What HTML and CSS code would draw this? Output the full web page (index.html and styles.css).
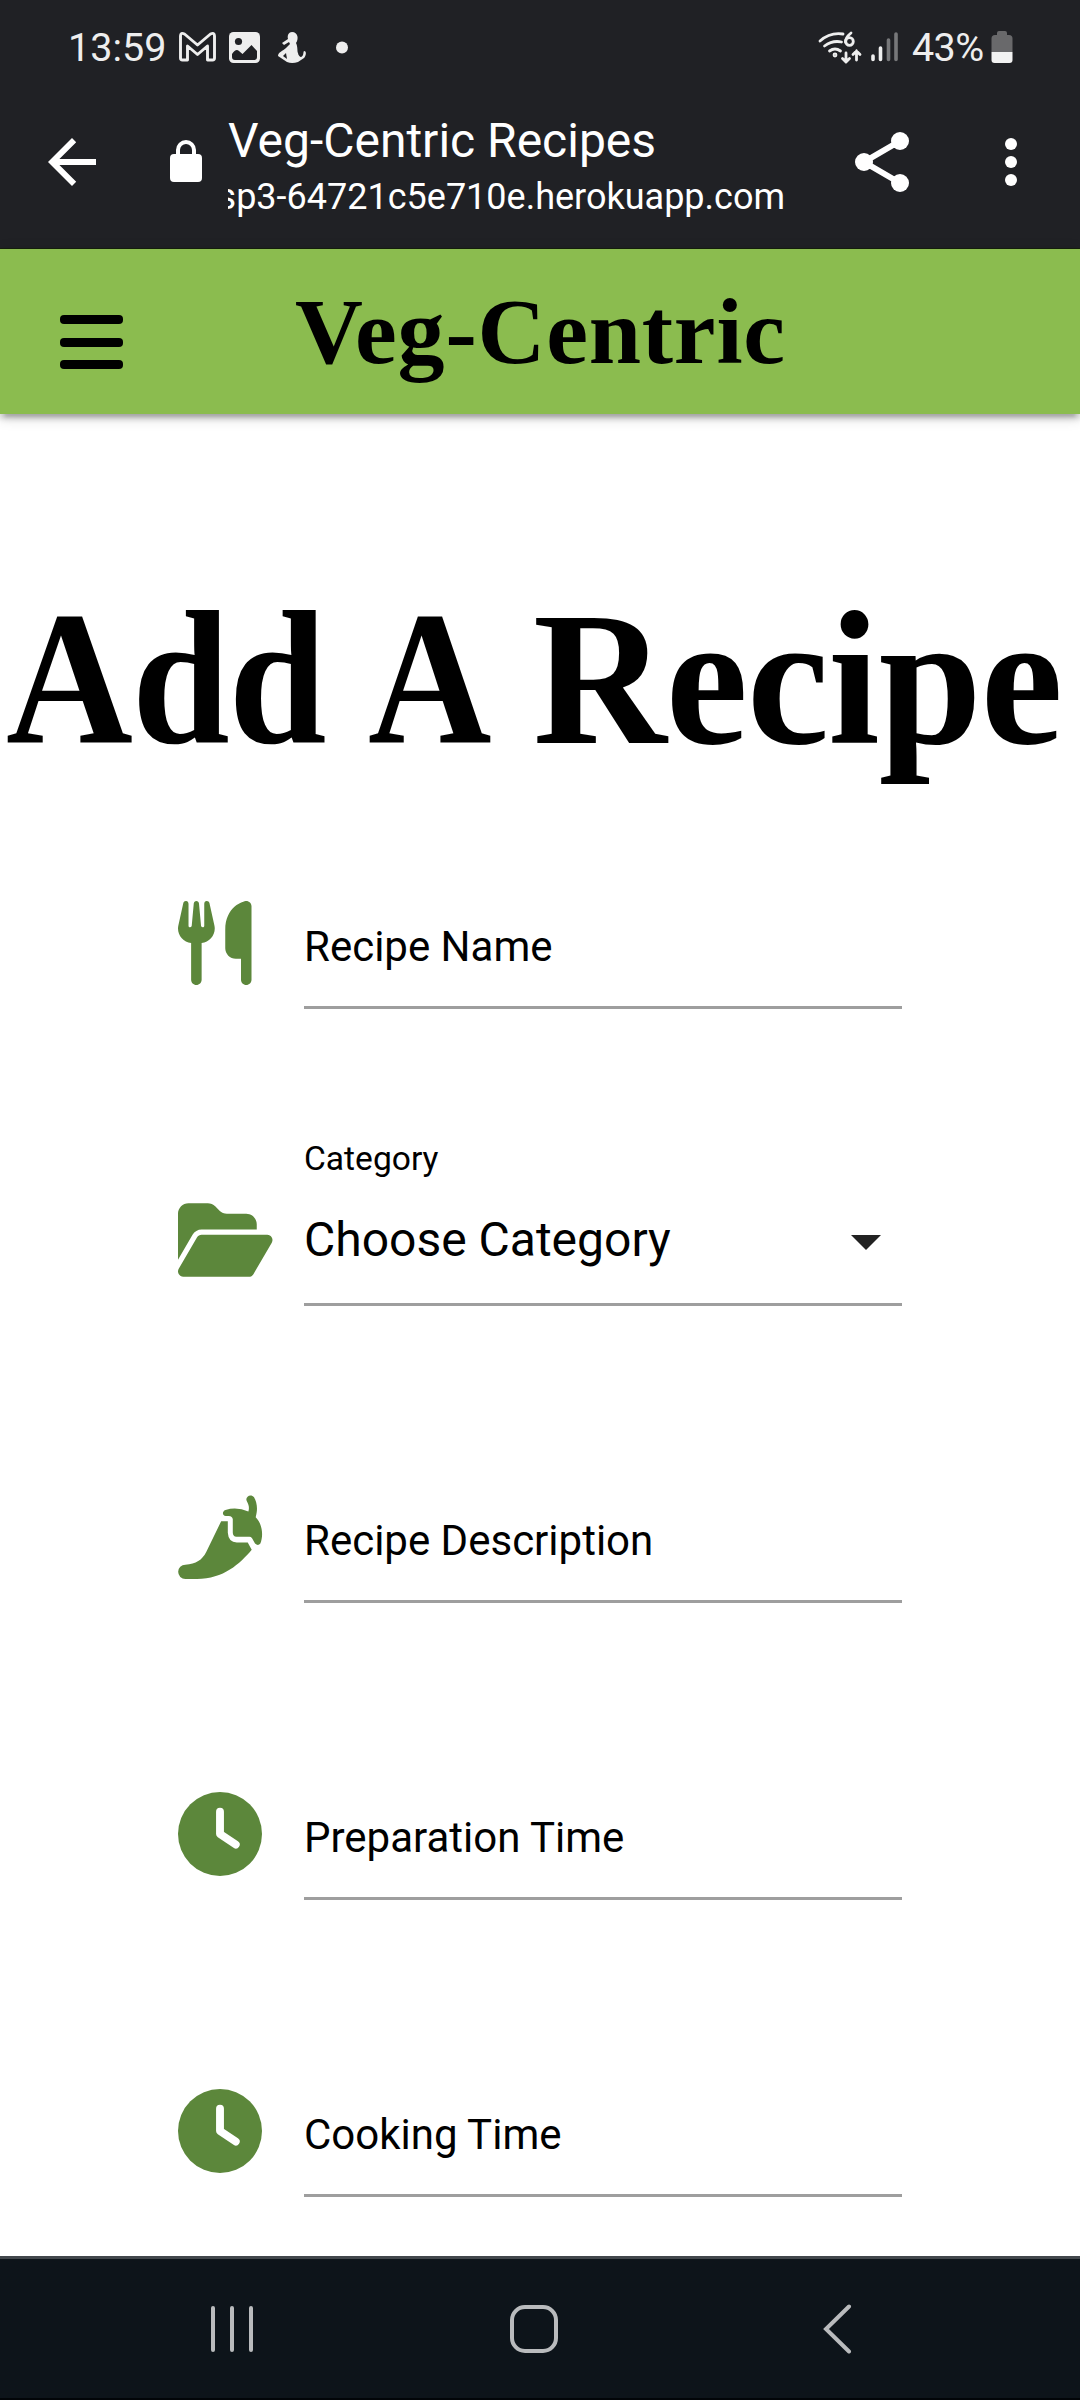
FILE: index.html
```html
<!DOCTYPE html>
<html lang="en">
<head>
<meta charset="utf-8">
<title>Veg-Centric Recipes</title>
<link rel="stylesheet" href="styles.css">
</head>
<body>
<div class="phone">
  <div class="status">
    <span class="time">13:59</span>
    <svg class="notes" width="180" height="40" viewBox="175 27 180 40">
      <path d="M180.500 58V36q0-4 4-2l13 11 13-11q4-2 4 2v22q0 2-2 2h-5V46l-10 8.500-10-8.500v14h-5q-2 0-2-2z" fill="none" stroke="#eee" stroke-width="2.900" stroke-linejoin="round"/>
      <rect x="229" y="32" width="31" height="31" rx="4.500" fill="#eee"/>
      <circle cx="238.500" cy="41.500" r="3.600" fill="#202125"/>
      <path d="M232 54q4-6 7-3l3.500 3L251.500 45l5.500 6v6q0 3-3 3h-19q-3 0-3-3z" fill="#202125"/>
      <path d="M292 32c6 0 7 7 4 11 2 4 1 8 2 10 0 2 2 4 3 4 3-1 2-5 3-6 3 0 2 5 0 7l-6 4q-6 2-11 0l-9-6c0-4 5-5 8-8l4-4-1-2-5 3-2-2 6-4c-1-4 1-7 4-7z" fill="#eee"/>
      <path d="M286 53l-3 3 4 3z" fill="#202125"/>
      <circle cx="342" cy="47.500" r="6" fill="#eee"/>
    </svg>
    <svg class="signals" width="90" height="40" viewBox="815 27 90 40" fill="none" stroke="#eee" stroke-width="2.800" stroke-linecap="round">
      <path d="M820 41q10-9 23-7M824.500 46q8-6 17-4M829.500 51q5.500-4 11 0"/>
      <path d="M851 33q-6 5-5.500 9"/><circle cx="849.500" cy="41.500" r="3.800"/>
      <path d="M846 53v9m-3.500-3.500 3.500 3.500 3.500-3.500M856.500 60v-9m-3.500 3.500 3.500-3.500 3.500 3.500"/>
      <circle cx="835" cy="55" r="1" />
      <path d="M873 56v3.500M880.500 48v11.500" stroke-width="3.600"/>
      <path d="M888.500 40v19.500M896 34v25.500" stroke="#77787a" stroke-width="3.600"/>
    </svg>
    <span class="percent">43%</span>
    <svg class="battery" width="22" height="33" viewBox="0 0 22 33">
      <path d="M6 2q0-2 2-2h6q2 0 2 2v2h2q3.500 0 3.500 3.500V21H.5V7.500Q.5 4 4 4h2z" fill="#69696b"/>
      <path d="M.5 21h21v8q0 3-3 3h-15q-3 0-3-3z" fill="#f2f2f2"/>
    </svg>
  </div>

  <div class="toolbar">
    <svg class="back" width="48" height="48" viewBox="0 0 16 16"><path d="M16 7v2H3.800l5.600 5.600L8 16 0 8l8-8 1.400 1.400L3.800 7z" fill="#fff"/></svg>
    <svg class="lock" width="32" height="42" viewBox="0 0 32 42"><path d="M4 14h2v-4a10 10 0 0 1 20 0v4h2q4 0 4 4v20q0 4-4 4H4q-4 0-4-4V18q0-4 4-4zm6 0h12v-4a6 6 0 0 0-12 0z" fill="#fff"/></svg>
    <div class="page">
      <div class="page-title">Veg-Centric Recipes</div>
      <div class="page-url"><span>sp3-64721c5e710e.herokuapp.com</span></div>
    </div>
    <svg class="share" width="54" height="60" viewBox="0 0 54 60"><path d="M45 9 9 30l36 21" fill="none" stroke="#fff" stroke-width="6"/><g fill="#fff"><circle cx="45" cy="9" r="9"/><circle cx="9" cy="30" r="9"/><circle cx="45" cy="51" r="9"/></g></svg>
    <svg class="more" width="12" height="48" viewBox="0 0 12 48" fill="#fff"><circle cx="6" cy="6" r="6"/><circle cx="6" cy="24" r="6"/><circle cx="6" cy="42" r="6"/></svg>
  </div>

  <header class="navbar">
    <div class="burger"><i></i><i></i><i></i></div>
    <div class="brand">Veg-Centric</div>
  </header>

  <main class="content">
    <h1 class="heading"><span class="w1">Add</span><span class="w2">A</span><span class="w3">Recipe</span></h1>
    <form class="form">
      <div class="row">
        <svg class="icon" viewBox="0 0 576 512"><path d="M416 0C400 0 288 32 288 176V288c0 35.300 28.700 64 64 64h32V480c0 17.700 14.300 32 32 32s32-14.300 32-32V32c0-17.700-14.300-32-32-32zM64 16C64 7.800 57.900 1 49.700 .1S34.200 4.600 32.400 12.500L2.100 148.800C.7 155.100 0 161.500 0 167.900c0 45.900 35.100 83.600 80 87.700V480c0 17.700 14.300 32 32 32s32-14.300 32-32V255.600c44.900-4.100 80-41.800 80-87.700c0-6.400-.7-12.800-2.100-19.100L191.600 12.500c-1.800-8-9.300-13.300-17.400-12.400S160 7.800 160 16V150.200c0 5.400-4.400 9.800-9.800 9.800c-5.100 0-9.300-3.900-9.800-9L127.900 14.600C127.200 6.300 120.300 0 112 0s-15.200 6.300-15.900 14.600L83.700 151c-.5 5.100-4.700 9-9.800 9c-5.400 0-9.800-4.400-9.800-9.800V16z"/></svg>
        <div class="field"><span class="label">Recipe Name</span></div>
      </div>
      <div class="row">
        <svg class="icon" viewBox="0 0 576 512"><path d="M88.700 223.800L0 375.800V96C0 60.700 28.700 32 64 32H181.500c17 0 33.300 6.700 45.300 18.700l26.500 26.500c12 12 28.300 18.700 45.300 18.700H416c35.300 0 64 28.700 64 64v32H144c-22.800 0-43.800 12.100-55.300 31.800zm27.600 16.100C122.100 230 132.600 224 144 224H544c11.500 0 22 6.100 27.700 16.100s5.700 22.200-.1 32.100l-112 192C453.900 474 443.400 480 432 480H32c-11.500 0-22-6.100-27.700-16.100s-5.700-22.200 .1-32.100l112-192z"/></svg>
        <div class="field select">
          <span class="caption">Category</span>
          <span class="value">Choose Category<svg class="caret" width="30" height="15" viewBox="0 0 30 15"><path d="M0 0h30L15 15z"/></svg></span>
        </div>
      </div>
      <div class="row">
        <svg class="icon" viewBox="53 73 284.600 253"><path d="M183 152h20v35q2 29 27 29h33l12 22C240 280 190 326 110 326H75a21.500 21.500 0 0 1 0-43C108 280 125 270 138 245z"/><path d="M218 146q-1-9-12-10h-9c-11 0-12-14-1-18q35-10 69 5c3-11 2-20-5-32c-6-12 12-24 22-11c9 16 12 35 5 60c20 20 24 55 14 79q-7 9-16 0l-9-16q-3-4-8-4h-39q-11-1-11-13z"/></svg>
        <div class="field"><span class="label">Recipe Description</span></div>
      </div>
      <div class="row">
        <svg class="icon" viewBox="0 0 576 512"><circle cx="256" cy="256" r="256"/><path class="hands" d="M256 120V256l96 64"/></svg>
        <div class="field"><span class="label">Preparation Time</span></div>
      </div>
      <div class="row">
        <svg class="icon" viewBox="0 0 576 512"><circle cx="256" cy="256" r="256"/><path class="hands" d="M256 120V256l96 64"/></svg>
        <div class="field"><span class="label">Cooking Time</span></div>
      </div>
    </form>
  </main>

  <nav class="sysnav">
    <svg width="44" height="48" viewBox="0 0 44 48"><path d="M3 3v42M22 3v42M41 3v42"/></svg>
    <svg width="50" height="50" viewBox="0 0 50 50"><rect x="3" y="3" width="44" height="44" rx="13"/></svg>
    <svg width="30" height="50" viewBox="0 0 30 50"><path d="M27 2.500 4 25l23 22.500"/></svg>
  </nav>
</div>
</body>
</html>
```

FILE: styles.css
```css
* { box-sizing: border-box; }
body { margin: 0; background: #fff; font-family: Roboto, sans-serif; color: #000; }
svg { display: block; flex: none; }

.phone { width: 1080px; height: 2400px; display: flex; flex-direction: column; overflow: hidden; }

.status { height: 96px; background: #202125; color: #eee; display: flex; align-items: flex-start; padding-left: 68px; }
.time, .percent { font-size: 39.5px; line-height: 46px; margin-top: 25px; white-space: nowrap; }
.time { width: 107px; }
.notes, .signals { margin-top: 27px; }
.signals { margin-left: 460px; }
.percent { width: 85px; margin-left: 7px; letter-spacing: -.6px; }
.battery { margin: 31px 0 0 -6px; }

.toolbar { height: 153px; background: #202125; color: #fff; display: flex; align-items: flex-start; padding-left: 48px; border-bottom: 1px solid #16200c; }
.back { margin-top: 42px; }
.lock { margin: 44px 0 0 74px; }
.page { width: 557px; margin: 17px 0 0 26px; }
.page-title { font-size: 48px; line-height: 56px; white-space: nowrap; }
.page-url { display: flex; justify-content: flex-end; overflow: hidden; font-size: 36px; line-height: 44px; white-space: nowrap; margin-top: 6px; }
.share { margin: 36px 0 0 70px; }
.more { margin: 42px 0 0 96px; }

.navbar { height: 165px; background: #8bbc4f; display: flex; padding-left: 60px;
  box-shadow: 0 5px 5px rgba(0,0,0,.14), 0 8px 3px -5px rgba(0,0,0,.12), 0 3px 13px rgba(0,0,0,.2); }
.burger { width: 63px; height: 54px; margin-top: 66px; display: flex; flex-direction: column; justify-content: space-between; }
.burger i { height: 9px; border-radius: 4px; background: #000; }
.brand { font: bold 94px/110px "Liberation Serif", serif; letter-spacing: .8px; margin: 27px 0 0 172px; white-space: nowrap; }

.content { height: 1842px; display: flex; flex-direction: column; }
.heading { display: flex; height: 220px; margin: 155px 0 0; font: bold 190px/220px "Liberation Serif", serif; white-space: nowrap; }
.heading span { transform-origin: left; }
.w1 { width: 362px; margin-left: 6px; letter-spacing: -1px; transform: scaleX(.925); }
.w2 { width: 165px; transform: scaleX(.9); }
.w3 { letter-spacing: -1px; transform: scaleX(.975); }

.form { width: 724px; margin: -77px 0 0 178px; }
.row { height: 297px; display: flex; align-items: flex-end; }
.icon { width: 94.5px; height: 84px; margin: 0 31.5px 24px 0; fill: #5c873b; }
.hands { fill: none; stroke: #fff; stroke-width: 48; stroke-linecap: round; stroke-linejoin: round; }
.field { flex: 1; height: 180px; border-bottom: 3px solid #9e9e9e; display: flex; flex-direction: column; justify-content: flex-end; }
.label { font-size: 42px; line-height: 50px; margin-bottom: 34px; }
.caption { font-size: 33.600px; line-height: 40px; margin-bottom: 33px; }
.value { font-size: 48px; line-height: 56px; margin-bottom: 35px; display: flex; justify-content: space-between; align-items: center; padding-right: 21px; }
.caret { fill: #222; margin-top: 5px; }

.sysnav { height: 144px; border-top: 3px solid #42474c; border-bottom: 2px solid #020508; background: #0d141a; display: flex; align-items: center; gap: 255px; padding-left: 210px; }
.sysnav svg { fill: none; stroke: #b9bbbd; stroke-width: 4; stroke-linecap: round; }
.sysnav svg:last-child { margin-left: 8px; }
```
